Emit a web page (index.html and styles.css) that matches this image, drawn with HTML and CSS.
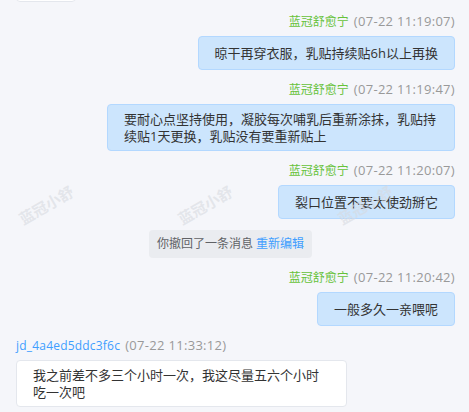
FILE: index.html
```html
<!DOCTYPE html>
<html lang="zh-CN">
<head>
    <meta charset="UTF-8">
    <meta name="viewport" content="width=device-width, initial-scale=1.0">
    <title>聊天记录</title>
    <link rel="stylesheet" href="styles.css">
</head>
<body>

    <div class="chat">
        <div class="msg left peek">
            <div class="bubble"></div>
        </div>

        <div class="msg right">
            <div class="meta"><span class="name">蓝冠舒愈宁</span> <span class="time">(07-22 11:19:07)</span></div>
            <div class="bubble">晾干再穿衣服，乳贴持续贴6h以上再换</div>
        </div>

        <div class="msg right">
            <div class="meta"><span class="name">蓝冠舒愈宁</span> <span class="time">(07-22 11:19:47)</span></div>
            <div class="bubble">要耐心点坚持使用，凝胶每次哺乳后重新涂抹，乳贴持续贴1天更换，乳贴没有要重新贴上</div>
        </div>

        <div class="msg right">
            <div class="meta"><span class="name">蓝冠舒愈宁</span> <span class="time">(07-22 11:20:07)</span></div>
            <div class="bubble">裂口位置不要太使劲掰它</div>
        </div>

        <div class="notice-row">
            <div class="notice">你撤回了一条消息 <a href="#" class="re-edit">重新编辑</a></div>
        </div>

        <div class="msg right">
            <div class="meta"><span class="name">蓝冠舒愈宁</span> <span class="time">(07-22 11:20:42)</span></div>
            <div class="bubble">一般多久一亲喂呢</div>
        </div>

        <div class="msg left">
            <div class="meta"><span class="name user">jd_4a4ed5ddc3f6c</span> <span class="time">(07-22 11:33:12)</span></div>
            <div class="bubble">我之前差不多三个小时一次，我这尽量五六个小时吃一次吧</div>
        </div>
    </div>

    <!-- 水印 -->
    <div class="watermarks">
        <span class="wm wm-1">蓝冠小舒</span>
        <span class="wm wm-2">蓝冠小舒</span>
        <span class="wm wm-3">蓝冠小舒</span>
    </div>

</body>
</html>
```

FILE: styles.css
```css
:root {
    --background-color: #f5f6fa;
    --text-color: #333;
    --muted-color: #999;
    --agent-color: #67c23a;
    --user-color: #409eff;
    --self-bubble: #cce5fd;
    --self-border: #b3d8ff;
    --other-bubble: #fff;
    --other-border: #e4e7ed;
    --notice-background: #eaecf0;
}

body {
    margin: 0;
    height: 412px;
    overflow: hidden;
    position: relative;
    font-family: 'Open Sans', 'Noto Sans CJK SC', sans-serif;
    background-color: var(--background-color);
    color: var(--text-color);
}

.chat {
    display: flex;
    flex-direction: column;
    gap: 9px;
    padding: 0 14px 0 16px;
}

.msg {
    display: flex;
    flex-direction: column;
    gap: 4px;
}

.msg.right {
    align-items: flex-end;
}

.msg.left {
    align-items: flex-start;
}

.meta {
    font-size: 12px;
    line-height: 20px;
    white-space: nowrap;
}

.name {
    color: var(--agent-color);
}

.name.user {
    color: var(--user-color);
    letter-spacing: 0.2px;
}

.time {
    margin-left: 2px;
    color: var(--muted-color);
    font-size: 13px;
    letter-spacing: 0.3px;
}

.bubble {
    box-sizing: border-box;
    min-height: 34px;
    display: flex;
    align-items: center;
    padding: 6px 16px 5px;
    font-size: 13px;
    line-height: 17px;
    border-radius: 4px;
    word-break: break-all;
}

.msg.right .bubble {
    max-width: 348px;
    background-color: var(--self-bubble);
    border: 1px solid var(--self-border);
}

.msg.left .bubble {
    max-width: 331px;
    background-color: var(--other-bubble);
    border: 1px solid var(--other-border);
}

/* 上一条消息只露出底边 */
.msg.peek {
    margin-top: -38px;
}

.msg.peek .bubble {
    width: 60px;
    height: 40px;
}

.notice-row {
    display: flex;
    justify-content: center;
    padding-right: 10px;
    margin-top: 2px;
}

.notice {
    padding: 0 8px;
    font-size: 12px;
    line-height: 28px;
    color: #606266;
    background-color: var(--notice-background);
    border-radius: 4px;
}

.re-edit {
    color: var(--user-color);
    text-decoration: none;
}

.watermarks {
    position: absolute;
    inset: 0;
    pointer-events: none;
}

.wm {
    position: absolute;
    top: 194px;
    font-family: 'Noto Sans CJK SC', sans-serif;
    font-size: 15px;
    font-weight: bold;
    color: rgba(215, 218, 224, 0.6);
    transform: rotate(-30deg);
    white-space: nowrap;
}

.wm-1 { left: 16px; }
.wm-2 { left: 175px; }
.wm-3 { left: 335px; }
```
